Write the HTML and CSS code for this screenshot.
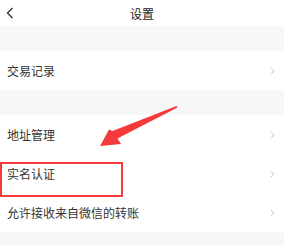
FILE: index.html
```html
<!DOCTYPE html>
<html lang="zh-CN">

<head>
    <meta charset="UTF-8">
    <meta name="viewport" content="width=device-width, initial-scale=1.0">
    <title>设置</title>
    <link rel="stylesheet" href="styles.css">
</head>

<body>
    <div class="page">
        <div class="header">
            <svg class="back" width="8" height="12" viewBox="0 0 8 12">
                <path d="M6.5 1 L1.5 6 L6.5 11" fill="none" stroke="#333" stroke-width="1.4" />
            </svg>
            <div class="title">设置</div>
        </div>
        <div class="gap"></div>
        <div class="row">
            <span>交易记录</span>
            <svg class="chevron" width="5" height="8" viewBox="0 0 5 8">
                <path d="M1 1 L4 4 L1 7" fill="none" stroke="#c4c4c4" stroke-width="1" />
            </svg>
        </div>
        <div class="gap"></div>
        <div class="row">
            <span>地址管理</span>
            <svg class="chevron" width="5" height="8" viewBox="0 0 5 8">
                <path d="M1 1 L4 4 L1 7" fill="none" stroke="#c4c4c4" stroke-width="1" />
            </svg>
        </div>
        <div class="row">
            <span>实名认证</span>
            <svg class="chevron" width="5" height="8" viewBox="0 0 5 8">
                <path d="M1 1 L4 4 L1 7" fill="none" stroke="#c4c4c4" stroke-width="1" />
            </svg>
        </div>
        <div class="row">
            <span>允许接收来自微信的转账</span>
            <svg class="chevron" width="5" height="8" viewBox="0 0 5 8">
                <path d="M1 1 L4 4 L1 7" fill="none" stroke="#c4c4c4" stroke-width="1" />
            </svg>
        </div>
        <div class="gap rest"></div>

        <!-- annotation -->
        <div class="mark-box"></div>
        <svg class="mark-arrow" width="284" height="245" viewBox="0 0 284 245">
            <polygon points="176.5,106 112.5,131 109,129.5 100,146 121,144 117.5,138.5 177.5,107.5" fill="#f43a3a" />
        </svg>
    </div>
</body>

</html>
```

FILE: styles.css
```css
body {
    margin: 0;
    background-color: #f7f7f7;
    font-family: "Noto Sans CJK SC", "Noto Sans", sans-serif;
}

.page {
    position: relative;
    width: 284px;
    height: 245px;
    overflow: hidden;
    display: flex;
    flex-direction: column;
}

.header {
    height: 26px;
    background-color: #fff;
    display: flex;
    align-items: center;
    position: relative;
}

.back {
    margin-left: 6px;
}

.title {
    position: absolute;
    left: 0;
    right: 0;
    text-align: center;
    font-size: 12px;
    color: #222;
    pointer-events: none;
}

.gap {
    height: 25px;
    background-color: #f7f7f7;
}

.rest {
    flex: 1;
}

.row {
    height: 39px;
    background-color: #fff;
    display: flex;
    align-items: center;
    justify-content: space-between;
    padding: 0 9px 0 7px;
    font-size: 12px;
    color: #333;
}

.mark-box {
    position: absolute;
    left: 0;
    top: 162px;
    width: 119px;
    height: 31px;
    border: 2px solid #f43a3a;
}

.mark-arrow {
    position: absolute;
    left: 0;
    top: 0;
}
```
